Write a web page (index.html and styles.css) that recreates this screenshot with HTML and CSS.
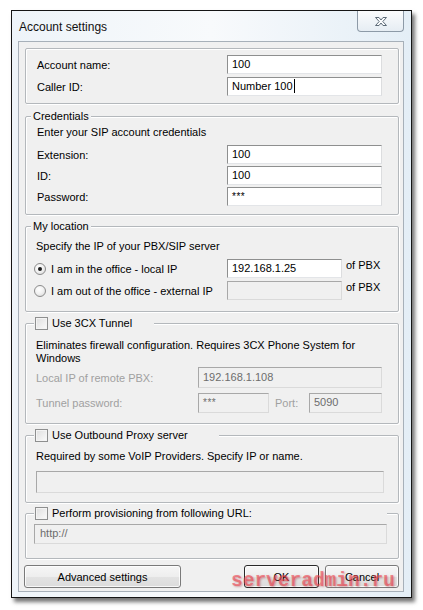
FILE: index.html
```html
<!DOCTYPE html>
<html>
<head>
<meta charset="utf-8">
<title>Account settings</title>
<link rel="stylesheet" href="styles.css">
</head>
<body>
<div class="page">
  <div class="window">
    <div class="titlebar">
      <span class="title">Account settings</span>
      <div class="close">
        <svg width="14" height="11" viewBox="0 0 14 11"><path d="M1.5 1.5H5L7 4L9 1.5H12.5L8.8 5.5L12.5 9.5H9L7 7L5 9.5H1.5L5.2 5.5Z" fill="#fbfcfd" stroke="#5d6b78" stroke-width="1" stroke-linejoin="round"/></svg>
      </div>
    </div>
    <div class="client">
      <div class="group g-account">
        <div class="gb">
          <div class="row"><span class="lbl">Account name:</span><div class="input w155">100</div></div>
          <div class="row"><span class="lbl">Caller ID:</span><div class="input w155">Number 100<span class="caret"></span></div></div>
        </div>
      </div>

      <div class="group g-cred">
        <div class="legend text-legend">Credentials</div>
        <div class="gb">
          <div class="desc">Enter your SIP account credentials</div>
          <div class="rows tight">
            <div class="row"><span class="lbl">Extension:</span><div class="input w155">100</div></div>
            <div class="row"><span class="lbl">ID:</span><div class="input w155">100</div></div>
            <div class="row"><span class="lbl">Password:</span><div class="input w155 pw">***</div></div>
          </div>
        </div>
      </div>

      <div class="group g-loc">
        <div class="legend text-legend">My location</div>
        <div class="gb">
          <div class="desc">Specify the IP of your PBX/SIP server</div>
          <div class="rows loc-rows">
            <div class="row loc-row">
              <span class="opt"><span class="radio on"></span><span>I am in the office - local IP</span></span>
              <div class="input w115">192.168.1.25</div>
              <span class="suffix">of PBX</span>
            </div>
            <div class="row loc-row">
              <span class="opt"><span class="radio"></span><span>I am out of the office - external IP</span></span>
              <div class="input w115 disabled"></div>
              <span class="suffix">of PBX</span>
            </div>
          </div>
        </div>
      </div>

      <div class="group g-tunnel">
        <div class="legend check-legend w-tunnel"><span class="check"></span><span>Use 3CX Tunnel</span></div>
        <div class="gb">
          <div class="desc two">Eliminates firewall configuration. Requires 3CX Phone System for<br>Windows</div>
          <div class="rows tunnel-rows">
            <div class="row tun-row"><span class="lbl dim">Local IP of remote PBX:</span><div class="input disabled w184">192.168.1.108</div></div>
            <div class="row tun-row"><span class="lbl dim">Tunnel password:</span>
              <div class="pw-port">
                <div class="input disabled w71 pw">***</div>
                <span class="dim port-lbl">Port:</span>
                <div class="input disabled w73">5090</div>
              </div>
            </div>
          </div>
        </div>
      </div>

      <div class="group g-proxy">
        <div class="legend check-legend w-proxy"><span class="check"></span><span>Use Outbound Proxy server</span></div>
        <div class="gb">
          <div class="desc">Required by some VoIP Providers. Specify IP or name.</div>
          <div class="input disabled proxy-input"></div>
        </div>
      </div>

      <div class="group g-prov">
        <div class="legend check-legend w-prov"><span class="check"></span><span>Perform provisioning from following URL:</span></div>
        <div class="gb">
          <div class="input disabled url-input">http://</div>
        </div>
      </div>

      <div class="buttons">
        <div class="btn adv">Advanced settings</div>
        <div class="btn-pair">
          <div class="btn ok">OK</div>
          <div class="btn cancel">Cancel</div>
        </div>
      </div>
    </div>
  </div>
  <div class="watermark">serveradmin.ru</div>
</div>
</body>
</html>
```

FILE: styles.css
```css
* { box-sizing: border-box; }
html, body { margin: 0; padding: 0; background: #fff; }
body {
  font-family: "Liberation Sans", Arial, sans-serif;
  font-size: 11px;
  color: #000;
}
.page {
  position: relative;
  width: 423px;
  height: 610px;
  padding: 10px 0 0 11px;
}
.window {
  width: 401px;
  height: 588px;
  border: 1px solid #151515;
  background: linear-gradient(90deg, #eef4f9 0%, #f8fafc 50%, #e4eef6 100%);
  box-shadow: 3px 4px 4px rgba(0, 0, 0, 0.55);
  display: flex;
  flex-direction: column;
}
.titlebar {
  height: 30px;
  display: flex;
  justify-content: space-between;
  align-items: flex-start;
}
.title {
  font-size: 12px;
  line-height: 16px;
  padding: 8px 0 0 7px;
  color: #111;
}
.close {
  width: 47px;
  height: 21px;
  margin-right: 7px;
  border: 1px solid #8d9aa7;
  border-top: 0;
  border-radius: 0 0 4px 4px;
  background: linear-gradient(#fbfcfd, #e6edf3);
  display: flex;
  align-items: center;
  justify-content: center;
}
.client {
  height: 551px;
  margin: 0 7px 0 6px;
  border: 1px solid #a7b0b9;
  background: #f0f0f0;
  padding: 6px 4px 0 6px;
  display: flex;
  flex-direction: column;
}
.group {
  border: 1px solid #b4b8bc;
  border-radius: 2px;
  box-shadow: inset 1px 1px 0 #fff, 1px 1px 0 #fff;
  display: flex;
  flex-direction: column;
}
.legend {
  align-self: flex-start;
  height: 14px;
  margin-top: -8px;
  background: #f0f0f0;
  line-height: 14px;
  display: flex;
  align-items: center;
  white-space: nowrap;
}
.text-legend { margin-left: 5px; padding: 0 2px; }
.check-legend { margin-left: 8px; padding-left: 1px; gap: 4px; }
.w-tunnel { width: 120px; }
.w-proxy { width: 185px; }
.w-prov { width: 353px; }

.gb { display: flex; flex-direction: column; padding-left: 11px; }
.rows { display: flex; flex-direction: column; gap: 3px; }
.rows.tight { gap: 2px; }
.row {
  display: grid;
  grid-template-columns: 190px auto;
  align-items: center;
  height: 19px;
}
.lbl { white-space: nowrap; }
.dim { color: #a0a0a0; }
.desc { line-height: 13px; white-space: nowrap; }

.input {
  height: 19px;
  border: 1px solid;
  border-color: #8e8f8f #dcdddf #e3e5e8 #8e8f8f;
  background: #fff;
  padding: 0 4px;
  line-height: 17px;
  white-space: nowrap;
  overflow: hidden;
}
.input.disabled {
  background: #f0f0f0;
  color: #6d6d6d;
  border-color: #a8a8a8 #dadada #dadada #a8a8a8;
}
.input.pw { font-size: 10px; letter-spacing: 0.5px; }
.caret {
  display: inline-block;
  width: 1px;
  height: 14px;
  background: #000;
  vertical-align: -3px;
  margin-left: 1px;
}
.w155 { width: 155px; }
.w115 { width: 115px; }
.w184 { width: 184px; height: 21px; line-height: 19px; }
.w71 { width: 71px; height: 20px; }
.w73 { width: 73px; height: 20px; }

/* group 1 */
.g-account { height: 56px; }
.g-account .gb { padding-top: 6px; gap: 3px; }

/* credentials */
.g-cred { height: 99px; margin-top: 12px; }
.g-cred .desc { margin-top: 3px; }
.g-cred .rows { margin-top: 6px; }

/* location */
.g-loc { height: 86px; margin-top: 11px; }
.g-loc .gb { padding-left: 10px; }
.g-loc .desc { margin-top: 7px; }
.loc-rows { margin-top: 6px; }
.loc-row { grid-template-columns: 191px 115px auto; }
.opt { display: flex; align-items: center; gap: 5px; margin-left: -2px; white-space: nowrap; }
.suffix { margin-left: 4px; align-self: start; margin-top: 0; }
.radio {
  width: 12px;
  height: 12px;
  border-radius: 50%;
  border: 1px solid #8b8b8b;
  background: radial-gradient(circle at 40% 35%, #ffffff 0%, #f2f2f2 45%, #d4d4d4 100%);
  display: flex;
  align-items: center;
  justify-content: center;
  flex: none;
}
.radio.on::after {
  content: "";
  width: 4px;
  height: 4px;
  border-radius: 50%;
  background: #1c1c1c;
}

.check {
  width: 13px;
  height: 13px;
  border: 1px solid #8e8f8f;
  background: linear-gradient(135deg, #dedede, #fbfbfb);
  box-shadow: inset 0 0 0 1px #f4f4f4;
  flex: none;
}

/* tunnel */
.g-tunnel { height: 101px; margin-top: 11px; }
.g-tunnel .gb { padding-left: 10px; }
.g-tunnel .desc { margin-top: 9px; }
.tunnel-rows { margin-top: 2px; gap: 5px; }
.tun-row { grid-template-columns: 162px auto; height: 20px; }
.tun-row:first-child { height: 21px; }
.pw-port { display: flex; align-items: center; }
.port-lbl { margin-left: 6px; width: 34px; }

/* proxy */
.g-proxy { height: 68px; margin-top: 11px; }
.g-proxy .gb { padding-left: 10px; }
.g-proxy .desc { margin-top: 8px; }
.proxy-input { width: 348px; height: 22px; margin-top: 8px; }

/* provisioning */
.g-prov { height: 46px; margin-top: 10px; }
.g-prov .gb { padding-left: 8px; }
.url-input { width: 353px; height: 20px; margin-top: 4px; padding-left: 5px; }

/* buttons */
.buttons {
  margin-top: 6px;
  margin-left: -1px;
  display: flex;
  justify-content: space-between;
}
.btn-pair { display: flex; gap: 6px; }
.btn {
  height: 23px;
  border: 1px solid #7a7a7a;
  border-radius: 3px;
  background: linear-gradient(#f6f6f6 0%, #eeeeee 50%, #e3e3e3 51%, #dcdcdc 100%);
  box-shadow: inset 0 0 0 1px rgba(255, 255, 255, 0.8);
  display: flex;
  align-items: center;
  justify-content: center;
}
.adv { width: 157px; }
.ok { width: 75px; border-color: #2a2a2a; }
.cancel { width: 74px; }

.watermark {
  position: absolute;
  left: 231px;
  top: 571px;
  font-family: "Liberation Mono", "DejaVu Sans Mono", monospace;
  font-weight: bold;
  font-size: 19.5px;
  line-height: 20px;
  color: rgba(238, 70, 80, 0.62);
  text-shadow: 1px 1px 2px rgba(150, 20, 30, 0.35);
  white-space: nowrap;
}
```
